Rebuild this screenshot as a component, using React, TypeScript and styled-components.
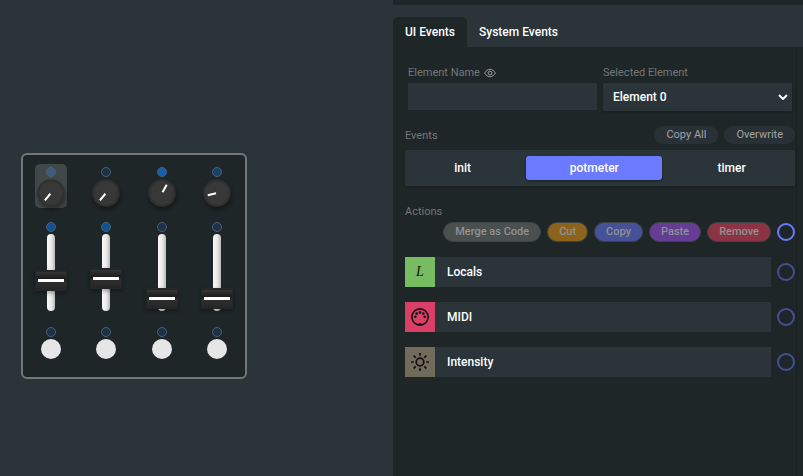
import React, { useState } from "react";
import styled, { createGlobalStyle, css } from "styled-components";

const colors = {
  primary: "#1e2628",
  secondary: "#2a3439",
  select: "#6b7aff",
  muted: "#747878",
};

const GlobalStyle = createGlobalStyle`
  *, *::before, *::after { box-sizing: border-box; }
  body {
    margin: 0;
    background: ${colors.secondary};
    color: #fff;
    font-family: Roboto, "Liberation Sans", sans-serif;
    font-size: 12px;
    line-height: 16px;
  }
  button, input, select { font: inherit; color: inherit; border: 0; padding: 0; margin: 0; }
  button { cursor: pointer; }
`;

const Layout = styled.div`
  display: grid;
  grid-template-columns: minmax(280px, 393fr) minmax(400px, 410fr);
  min-height: 100vh;
`;

const Workspace = styled.main`
  padding: 153px 21px 21px;
`;

const Module = styled.section`
  display: inline-grid;
  grid-template-columns: repeat(4, 1fr);
  width: 226px;
  padding: 9px 0 18px;
  border: 2px solid #747777;
  border-radius: 6px;
  background: ${colors.primary};
`;

const Column = styled.div`
  display: flex;
  flex-direction: column;
  align-items: center;
`;

const Cell = styled.div<{ $selected?: boolean }>`
  display: flex;
  flex-direction: column;
  align-items: center;
  gap: 2px;
  width: 32px;
  padding-top: 3px;
  border-radius: 5px;
  background: ${(p) => (p.$selected ? "#40484a" : "transparent")};
`;

const KnobCell = styled(Cell)`
  height: 44px;
`;

const FaderCell = styled(Cell)`
  margin-top: 11px;
`;

const ButtonCell = styled(Cell)`
  margin-top: 13px;
`;

const Led = styled.span<{ $color: string }>`
  width: 10px;
  height: 10px;
  border: 1px solid #49617a;
  border-radius: 50%;
  background: ${(p) => p.$color};
`;

const KnobSvg = styled.svg`
  display: block;
  width: 28px;
  height: 28px;
  overflow: visible;
  filter: drop-shadow(1px 3px 2px rgba(0, 0, 0, 0.35));
`;

const Fader = styled.input`
  appearance: none;
  writing-mode: vertical-lr;
  direction: rtl;
  width: 32px;
  height: 77px;
  background: transparent;
  outline: none;

  &::-webkit-slider-runnable-track {
    width: 8px;
    height: 77px;
    border-radius: 4px;
    background: linear-gradient(to right, #fafafa, #e8e8e8 55%, #b9b9b9);
  }

  &::-webkit-slider-thumb {
    appearance: none;
    width: 32px;
    height: 21px;
    margin-left: -12px;
    border: 1px solid #262626;
    border-width: 2px 1px 3px;
    border-radius: 1px;
    background:
      linear-gradient(#fff, #fff) center 7px / 26px 3px no-repeat,
      linear-gradient(#353535, #1b1b1b 45%, #2d2d2d 60%, #292929);
    box-shadow: 0 2px 4px rgba(0, 0, 0, 0.35);
  }
`;

const PadButton = styled.button`
  width: 20px;
  height: 20px;
  border-radius: 50%;
  background: #e6e6e6;
`;

const Editor = styled.aside`
  display: flex;
  flex-direction: column;
  background: ${colors.primary};
`;

const TabList = styled.div`
  display: flex;
  margin-top: 5px;
  padding-top: 12px;
  background: ${colors.secondary};
`;

const Tab = styled.button<{ $active: boolean }>`
  height: 30px;
  padding: 0 12px;
  border-radius: 5px 5px 0 0;
  font-weight: 500;
  background: ${(p) => (p.$active ? colors.primary : "transparent")};
`;

const Content = styled.div`
  flex: 1;
  display: flex;
  flex-direction: column;
  margin-right: 6px;
  padding: 18px 1px 20px 12px;
  border-right: 1px solid #192022;
`;

const Fields = styled.div`
  display: grid;
  grid-template-columns: 1fr 1fr;
  gap: 6px;
  padding: 0 3px;
`;

const Field = styled.div`
  display: flex;
  flex-direction: column;
  gap: 2px;
`;

const Label = styled.label`
  display: flex;
  align-items: center;
  gap: 4px;
  font-size: 11px;
  color: ${colors.muted};
`;

const SectionLabel = styled.h2`
  margin: 0;
  padding-top: 2px;
  font-size: 11px;
  font-weight: 400;
  line-height: 16px;
  color: ${colors.muted};
`;

const EyeSvg = styled.svg`
  width: 12px;
  height: 10px;
  color: #999d9d;
`;

const TextInput = styled.input`
  width: 100%;
  height: 27px;
  padding: 0 10px;
  background: ${colors.secondary};
`;

const SelectBox = styled.div`
  display: grid;
  align-items: center;
  background: ${colors.secondary};
  box-shadow: 0 1px 2px rgba(0, 0, 0, 0.2);

  & > * { grid-area: 1 / 1; }
`;

const Select = styled.select`
  appearance: none;
  width: 100%;
  height: 28px;
  padding: 0 24px 0 10px;
  border-radius: 0;
  font-weight: 500;
  background: transparent;
`;

const ChevronSvg = styled.svg`
  justify-self: end;
  width: 10px;
  height: 6px;
  margin-right: 4px;
  pointer-events: none;
`;

const EventsHeader = styled.div`
  display: flex;
  align-items: center;
  justify-content: space-between;
  margin-top: 15px;
`;

const PillGroup = styled.div`
  display: flex;
  gap: 6px;
`;

const SmallPill = styled.button`
  height: 18px;
  padding: 0 12px;
  border-radius: 9px;
  font-size: 11px;
  line-height: 18px;
  color: #a0a4a6;
  background: #293136;
`;

const EventBar = styled.div`
  display: flex;
  gap: 12px;
  margin-top: 6px;
  padding: 6px;
  background: ${colors.secondary};
  box-shadow: 0 1px 2px rgba(0, 0, 0, 0.2);
`;

const EventButton = styled.button<{ $active: boolean }>`
  flex: 1 1 auto;
  height: 24px;
  border-radius: 3px;
  font-weight: 500;
  background: transparent;
  ${(p) =>
    p.$active &&
    css`
      background: ${colors.select};
      box-shadow: 0 1px 3px rgba(0, 0, 0, 0.35);
    `}
`;

const ActionsHeader = styled.div`
  margin-top: 16px;
`;

const Toolbar = styled.div`
  display: flex;
  align-items: center;
  justify-content: flex-end;
  gap: 6px;
  margin-top: 2px;
`;

const ActionPill = styled.button<{ $color: string }>`
  height: 20px;
  padding: 0 11px;
  border: 1px solid #3b4446;
  border-radius: 10px;
  font-size: 11px;
  line-height: 18px;
  font-weight: 500;
  color: #8e9393;
  background: ${(p) => p.$color};
`;

const Circle = styled.input<{ $dim?: boolean }>`
  appearance: none;
  flex: none;
  width: 18px;
  height: 18px;
  border: 2px solid ${(p) => (p.$dim ? "#454f96" : colors.select)};
  border-radius: 50%;
  background: transparent;
  &:checked { background: ${colors.select}; }
`;

const BlockList = styled.ul`
  display: flex;
  flex-direction: column;
  gap: 15px;
  margin: 15px 0 0;
  padding: 0;
  list-style: none;
`;

const BlockRow = styled.li`
  display: flex;
  align-items: center;
  gap: 6px;
`;

const BlockButton = styled.button`
  flex: 1;
  display: flex;
  align-items: center;
  height: 30px;
  text-align: left;
  font-weight: 500;
  background: ${colors.secondary};
`;

const BlockIcon = styled.span<{ $color: string }>`
  display: grid;
  place-items: center;
  width: 30px;
  height: 30px;
  margin-right: 12px;
  color: #111;
  background: ${(p) => p.$color};
`;

const IconSvg = styled.svg`
  width: 18px;
  height: 18px;
`;

const LetterIcon = styled.span`
  font-family: "Liberation Serif", serif;
  font-size: 14px;
  font-style: italic;
  font-weight: 400;
`;

function Knob({ angle }: { angle: number }) {
  return (
    <KnobSvg viewBox="0 0 28 28" aria-hidden="true">
      <circle cx="14" cy="14" r="13.8" fill="#303030" />
      <circle cx="14" cy="14" r="11.5" fill="#383838" />
      <line x1="14" y1="4.5" x2="14" y2="13" stroke="#fff" strokeWidth="2" transform={`rotate(${angle} 14 14)`} />
    </KnobSvg>
  );
}

function MidiIcon() {
  return (
    <IconSvg viewBox="0 0 18 18" fill="none" stroke="currentColor" aria-hidden="true">
      <circle cx="9" cy="9" r="8.1" strokeWidth="1.6" />
      <path d="M7.5 16.2h3" strokeWidth="1.6" />
      <g fill="currentColor" stroke="none">
        <circle cx="4.3" cy="8.7" r="1.3" />
        <circle cx="5.7" cy="5.6" r="1.3" />
        <circle cx="9" cy="4.4" r="1.3" />
        <circle cx="12.3" cy="5.6" r="1.3" />
        <circle cx="13.7" cy="8.7" r="1.3" />
      </g>
    </IconSvg>
  );
}

function SunIcon() {
  return (
    <IconSvg viewBox="0 0 18 18" fill="none" stroke="currentColor" strokeWidth="1.7" aria-hidden="true">
      <circle cx="9" cy="9" r="3.8" />
      <path d="M9 0v2.800M9 15.200v2.800M0 9h2.800M15.200 9h2.800M2.700 2.700l2 2M13.300 13.300l2 2M15.300 2.700l-2 2M4.700 13.300l-2 2" />
    </IconSvg>
  );
}

const OFF = "#1c3249";
const ON = "#135291";

const channels = [
  { angle: 220, knobLed: "#405b7c", fader: 36, faderLed: ON },
  { angle: 220, knobLed: OFF, fader: 40, faderLed: ON },
  { angle: 30, knobLed: "#1260b0", fader: 3, faderLed: OFF },
  { angle: 256, knobLed: "#1a4066", fader: 3, faderLed: OFF },
];

const actions = [
  { name: "Merge as Code", color: "#4a4f50" },
  { name: "Cut", color: "#8c631c" },
  { name: "Copy", color: "#465197" },
  { name: "Paste", color: "#653d94" },
  { name: "Remove", color: "#8c3445" },
];

const blocks = [
  { name: "Locals", color: "#78bc61", icon: <LetterIcon aria-hidden="true">L</LetterIcon> },
  { name: "MIDI", color: "#d93f67", icon: <MidiIcon /> },
  { name: "Intensity", color: "#706b5b", icon: <SunIcon /> },
];

export default function App() {
  const [tab, setTab] = useState("UI Events");
  const [event, setEvent] = useState("potmeter");

  return (
    <>
      <GlobalStyle />
      <Layout>
        <Workspace>
          <Module aria-label="Controller module">
            {channels.map((c, i) => (
              <Column key={i}>
                <KnobCell $selected={i === 0}>
                  <Led $color={c.knobLed} />
                  <Knob angle={c.angle} />
                </KnobCell>
                <FaderCell>
                  <Led $color={c.faderLed} />
                  <Fader type="range" min={0} max={100} defaultValue={c.fader} aria-label={`Fader ${i + 1}`} />
                </FaderCell>
                <ButtonCell>
                  <Led $color={OFF} />
                  <PadButton aria-label={`Button ${i + 1}`} />
                </ButtonCell>
              </Column>
            ))}
          </Module>
        </Workspace>

        <Editor>
          <TabList role="tablist">
            {["UI Events", "System Events"].map((t) => (
              <Tab key={t} role="tab" aria-selected={tab === t} $active={tab === t} onClick={() => setTab(t)}>
                {t}
              </Tab>
            ))}
          </TabList>

          <Content>
            <Fields>
              <Field>
                <Label htmlFor="element-name">
                  Element Name
                  <EyeSvg viewBox="0 0 12 10" fill="none" stroke="currentColor" aria-hidden="true">
                    <path d="M.6 5C2 2.600 3.800 1.300 6 1.300S10 2.600 11.400 5C10 7.400 8.200 8.700 6 8.700S2 7.400 .6 5Z" />
                    <circle cx="6" cy="5" r="1.9" />
                  </EyeSvg>
                </Label>
                <TextInput id="element-name" type="text" />
              </Field>
              <Field>
                <Label htmlFor="selected-element">Selected Element</Label>
                <SelectBox>
                  <Select id="selected-element" defaultValue="Element 0">
                    <option>Element 0</option>
                  </Select>
                  <ChevronSvg viewBox="0 0 10 6" fill="none" stroke="#fff" strokeWidth="2" aria-hidden="true">
                    <path d="M1 1l4 4 4-4" />
                  </ChevronSvg>
                </SelectBox>
              </Field>
            </Fields>

            <EventsHeader>
              <SectionLabel>Events</SectionLabel>
              <PillGroup>
                <SmallPill>Copy All</SmallPill>
                <SmallPill>Overwrite</SmallPill>
              </PillGroup>
            </EventsHeader>
            <EventBar>
              {["init", "potmeter", "timer"].map((e) => (
                <EventButton key={e} $active={event === e} onClick={() => setEvent(e)}>
                  {e}
                </EventButton>
              ))}
            </EventBar>

            <ActionsHeader>
              <SectionLabel>Actions</SectionLabel>
            </ActionsHeader>
            <Toolbar>
              {actions.map((a) => (
                <ActionPill key={a.name} $color={a.color}>
                  {a.name}
                </ActionPill>
              ))}
              <Circle type="checkbox" aria-label="Select all actions" />
            </Toolbar>

            <BlockList>
              {blocks.map((b) => (
                <BlockRow key={b.name}>
                  <BlockButton>
                    <BlockIcon $color={b.color}>{b.icon}</BlockIcon>
                    {b.name}
                  </BlockButton>
                  <Circle $dim type="checkbox" aria-label={`Select ${b.name}`} />
                </BlockRow>
              ))}
            </BlockList>
          </Content>
        </Editor>
      </Layout>
    </>
  );
}
